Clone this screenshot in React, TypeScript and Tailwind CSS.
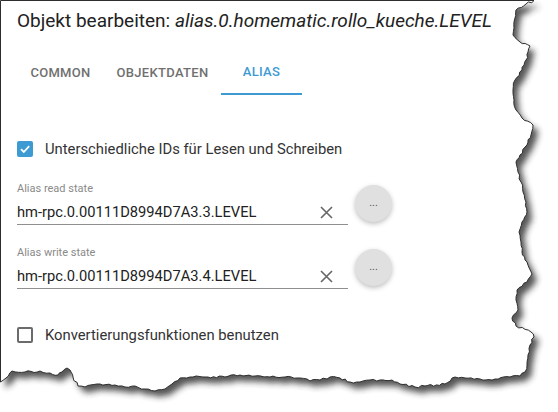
import React from 'react';

// Torn paper outline: hand-picked anchor points, roughened with a seeded jitter
const rightEdge: [number, number][] = [
  [534, 0.5], [526, 4], [516, 10], [515, 18], [514, 28], [513, 35], [520, 42], [530, 46], [528, 52],
  [526, 60], [522, 70], [515, 80], [513, 90], [514, 100], [516, 110], [522, 118], [533, 125],
  [531, 135], [527, 145], [520, 155], [516, 162], [518, 172], [521, 182], [523, 192], [526, 202],
  [527, 212], [522, 222], [519, 232], [521, 242], [522, 252], [527, 262], [532, 274], [527, 282],
  [517, 290], [516, 300], [518, 310], [512, 318], [516, 326], [531, 332], [534, 337], [530, 345],
  [528, 355], [527, 365], [525, 372], [520, 376],
];

const bottomEdge: [number, number][] = [
  [510, 377], [495, 379], [480, 379], [465, 378], [455, 377], [445, 384], [425, 386], [415, 387],
  [400, 384], [392, 380], [380, 380], [370, 380], [360, 382], [350, 382], [340, 378], [330, 377],
  [320, 380], [310, 381], [300, 378], [285, 377], [270, 377], [255, 376], [240, 375], [225, 377],
  [205, 377], [190, 377], [180, 378], [172, 384], [165, 389], [155, 391], [145, 389], [135, 386],
  [125, 387], [115, 385], [100, 384], [85, 387], [78, 386], [73, 377], [70, 370], [67, 368],
  [62, 372], [58, 375], [50, 373], [40, 371], [25, 372], [12, 371], [6, 378], [0.5, 382],
];

const buildPaperPath = () => {
  let seed = 7;
  const rand = () => {
    seed = (seed * 16807) % 2147483647;
    return seed / 2147483647 - 0.5;
  };
  const pts = [...rightEdge, ...bottomEdge];
  const out: string[] = ['M0.5,0.5'];
  for (let i = 0; i < pts.length - 1; i++) {
    const [x1, y1] = pts[i];
    const [x2, y2] = pts[i + 1];
    const len = Math.hypot(x2 - x1, y2 - y1);
    const steps = Math.max(1, Math.round(len / 3));
    const nx = -(y2 - y1) / (len || 1);
    const ny = (x2 - x1) / (len || 1);
    for (let s = 0; s < steps; s++) {
      const t = s / steps;
      const j = s === 0 ? 0 : rand() * 2.2;
      out.push(`L${(x1 + (x2 - x1) * t + nx * j).toFixed(1)},${(y1 + (y2 - y1) * t + ny * j).toFixed(1)}`);
    }
  }
  out.push('L0.5,382 Z');
  return out.join(' ');
};

const paperPath = buildPaperPath();

const TornEdge = () => (
  <svg className="absolute inset-0 pointer-events-none" width="558" height="412" viewBox="0 0 558 412">
    <defs>
      <filter id="tornShadow" x="-10%" y="-10%" width="130%" height="130%">
        <feGaussianBlur stdDeviation="3" />
      </filter>
      <mask id="outside">
        <rect x="0" y="0" width="558" height="412" fill="white" />
        <path d={paperPath} fill="black" />
      </mask>
    </defs>
    <g mask="url(#outside)">
      <rect x="0" y="0" width="558" height="412" fill="white" />
      <path d={paperPath} transform="translate(5 6)" fill="#2a2a2a" opacity="0.8" filter="url(#tornShadow)" />
    </g>
    <path d={paperPath} fill="none" stroke="#2e2e2e" strokeWidth="1" />
  </svg>
);

const Checkbox = ({ checked }: { checked: boolean }) =>
  checked ? (
    <span className="w-[16px] h-[16px] rounded-[2px] bg-[#3d9ad3] flex items-center justify-center">
      <svg width="12" height="12" viewBox="0 0 12 12">
        <path d="M2 6.2 L4.8 9 L10.2 3.2" fill="none" stroke="white" strokeWidth="1.8" />
      </svg>
    </span>
  ) : (
    <span className="w-[16px] h-[16px] rounded-[2px] border-2 border-[#6b6b6b] bg-white" />
  );

const AliasField = ({ label, value }: { label: string; value: string }) => (
  <div className="flex">
    <div className="w-[331px] border-b border-[#8f8f8f] pb-[2px]">
      <div className="text-[11px] leading-[14px] text-[#8a8a8a]">{label}</div>
      <div className="mt-[6px] h-[20px] flex items-center justify-between">
        <span className="text-[14.7px] leading-[20px] text-[#222]">{value}</span>
        <svg className="mr-[15px]" width="13" height="13" viewBox="0 0 13 13">
          <path d="M1 1 L12 12 M12 1 L1 12" stroke="#666" strokeWidth="1.6" />
        </svg>
      </div>
    </div>
    <button className="ml-[7px] mt-[3px] w-[37px] h-[37px] rounded-full bg-[#e0e0e0] shadow-[0_2px_5px_rgba(0,0,0,0.25)] flex items-center justify-center pb-[3px] text-[11px] text-[#555] leading-none">
      ...
    </button>
  </div>
);

export default function App() {
  return (
    <div className="relative w-[558px] h-[412px] bg-white overflow-hidden font-[Roboto,sans-serif]">
      <div className="pl-[17px] pt-[7px]">
        <h1 className="text-[19px] leading-[28px] text-[#222]">
          Objekt bearbeiten: <i>alias.0.homematic.rollo_kueche.LEVEL</i>
        </h1>

        <div className="mt-[12px] flex h-[48px] text-[13px] font-medium uppercase tracking-[0.3px]">
          <div className="w-[87px] flex items-center justify-center pt-[3px] text-[#707070]">Common</div>
          <div className="w-[117px] flex items-center justify-center pt-[3px] text-[#707070]">Objektdaten</div>
          <div className="w-[81px] flex items-center justify-center pt-[3px] text-[#3d9ad3] border-b-2 border-[#3d9ad3]">
            Alias
          </div>
        </div>

        <div className="mt-[42px] h-[24px] flex items-center gap-[12px]">
          <Checkbox checked />
          <span className="text-[14.8px] text-[#333]">Unterschiedliche IDs für Lesen und Schreiben</span>
        </div>

        <div className="mt-[21px]">
          <AliasField label="Alias read state" value="hm-rpc.0.00111D8994D7A3.3.LEVEL" />
        </div>
        <div className="mt-[21px]">
          <AliasField label="Alias write state" value="hm-rpc.0.00111D8994D7A3.4.LEVEL" />
        </div>

        <div className="mt-[34px] h-[24px] flex items-center gap-[12px]">
          <Checkbox checked={false} />
          <span className="text-[14.8px] text-[#333]">Konvertierungsfunktionen benutzen</span>
        </div>
      </div>
      <TornEdge />
    </div>
  );
}
